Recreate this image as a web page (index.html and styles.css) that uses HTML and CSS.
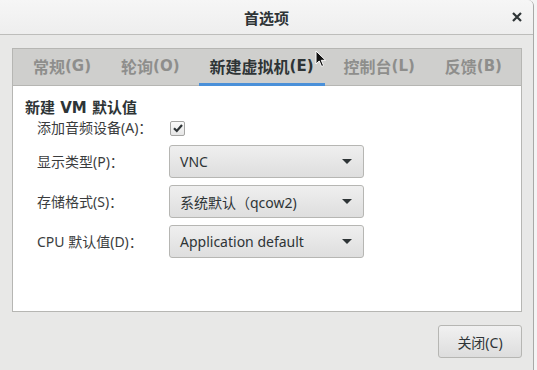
FILE: index.html
```html
<!DOCTYPE html>
<html lang="zh">
<head>
    <meta charset="UTF-8">
    <title>首选项</title>
    <link rel="stylesheet" href="styles.css">
</head>
<body>
<div class="window">
    <div class="titlebar">
        <span class="title">首选项</span>
        <span class="close">
            <svg width="10" height="10" viewBox="0 0 10 10"><path d="M1 1L9 9M9 1L1 9" stroke="#2e3436" stroke-width="2.2"/></svg>
        </span>
    </div>
    <div class="dialog-body">
        <div class="notebook">
            <div class="tabs">
                <span class="tab"><span class="zh">常规</span>(G)</span>
                <span class="tab"><span class="zh">轮询</span>(O)</span>
                <span class="tab active"><span class="zh">新建虚拟机</span>(E)</span>
                <span class="tab"><span class="zh">控制台</span>(L)</span>
                <span class="tab"><span class="zh">反馈</span>(B)</span>
            </div>
            <div class="page">
                <div class="section-title">新建 VM 默认值</div>
                <div class="form">
                    <label class="form-label">添加音频设备(A)：</label>
                    <div><span class="check"><svg width="12" height="12" viewBox="0 0 12 12"><path d="M2 6.2L4.8 9L10 3" fill="none" stroke="#2e3436" stroke-width="2.2"/></svg></span></div>

                    <label class="form-label">显示类型(P)：</label>
                    <div class="combo"><span>VNC</span><i class="arrow"></i></div>

                    <label class="form-label">存储格式(S)：</label>
                    <div class="combo"><span>系统默认（qcow2)</span><i class="arrow"></i></div>

                    <label class="form-label">CPU 默认值(D)：</label>
                    <div class="combo"><span>Application default</span><i class="arrow"></i></div>
                </div>
            </div>
        </div>
        <div class="actions">
            <button class="btn">关闭(C)</button>
        </div>
    </div>
    <!--鼠标指针-->
    <svg class="cursor" width="12" height="18" viewBox="0 0 12 18"><path d="M1 1L1 14L4.2 11L6.6 16.5L8.6 15.6L6.3 10.3L10.6 10.3Z" fill="#111" stroke="#fff" stroke-width="1"/></svg>
</div>
</body>
</html>
```

FILE: styles.css
```css
body {
    margin: 0;
    background: #f4f4f4;
    font-family: "Noto Sans", "Noto Sans CJK SC", sans-serif;
    color: #2e3436;
}
.window {
    position: relative;
    width: 533px;
    height: 370px;
    background: #e8e8e7;
    border-right: 1px solid #a9a9a7;
    border-top-right-radius: 6px;
    overflow: hidden;
}
.titlebar {
    height: 34px;
    background: linear-gradient(#f6f6f6, #eeeeee);
    border-bottom: 1px solid #bdbdbb;
    display: flex;
    align-items: center;
    justify-content: center;
    position: relative;
}
.title {
    font-size: 15px;
    font-weight: bold;
}
.close {
    position: absolute;
    right: 11px;
    top: 12px;
    line-height: 0;
}
.dialog-body {
    padding: 13px 11px 0 12px;
}
.notebook {
    border: 1px solid #b6b6b3;
    height: 262px;
    background: #fff;
    display: flex;
    flex-direction: column;
}
.tabs {
    height: 36px;
    background: #cfcfcd;
    border-bottom: 1px solid #b6b6b3;
    display: flex;
    gap: 8px;
    padding-left: 9px;
}
.tab {
    font-family: "DejaVu Sans", "Noto Sans CJK SC", sans-serif;
    font-size: 15px;
    font-weight: bold;
    color: #8e8e8c;
    padding: 0 11px;
    display: flex;
    align-items: center;
    border-bottom: 3px solid transparent;
    box-sizing: border-box;
    height: 37px;
    margin-bottom: -1px;
}
.tab .zh {
    font-size: 16px;
}
.tab.active {
    color: #2e3436;
    border-bottom-color: #4a90d9;
}
.page {
    padding: 12px 12px;
}
.section-title {
    font-family: "DejaVu Sans", "Noto Sans CJK SC", sans-serif;
    font-size: 15px;
    font-weight: bold;
    line-height: 20px;
}
.form {
    display: grid;
    grid-template-columns: 132px 195px;
    row-gap: 7px;
    align-items: center;
    padding-left: 12px;
}
.form-label {
    font-size: 14px;
    line-height: 20px;
    color: #3a3c3d;
}
.check {
    display: flex;
    align-items: center;
    justify-content: center;
    width: 13px;
    height: 13px;
    margin-left: 1px;
    border: 1px solid #a5a5a3;
    border-radius: 2px;
    background: linear-gradient(#fafafa, #e6e6e6);
}
.combo {
    height: 31px;
    border: 1px solid #b6b6b3;
    border-radius: 3px;
    background: linear-gradient(#efefef, #dedede);
    display: flex;
    align-items: center;
    justify-content: space-between;
    padding: 0 11px 0 10px;
    font-size: 14px;
    color: #2e3436;
}
.arrow {
    width: 0;
    height: 0;
    border-left: 5px solid transparent;
    border-right: 5px solid transparent;
    border-top: 5px solid #2e3436;
}
.actions {
    display: flex;
    justify-content: flex-end;
    padding-top: 13px;
}
.btn {
    width: 84px;
    height: 33px;
    border: 1px solid #b6b6b3;
    border-radius: 3px;
    background: linear-gradient(#f1f1f1, #dddddd);
    font-family: inherit;
    font-size: 14px;
    color: #2e3436;
}
.cursor {
    position: absolute;
    left: 315px;
    top: 50px;
}
```
